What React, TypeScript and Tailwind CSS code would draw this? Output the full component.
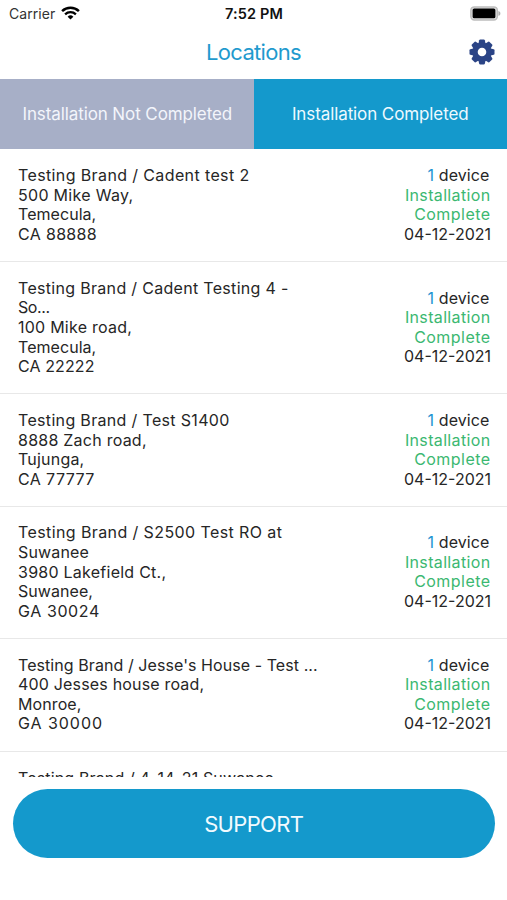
type Line = { text: string; tracking: string };

const locations: Line[][] = [
  [
    { text: "Testing Brand / Cadent test 2", tracking: "tracking-[0.38px]" },
    { text: "500 Mike Way,", tracking: "tracking-[0.3px]" },
    { text: "Temecula,", tracking: "tracking-[0.05px]" },
    { text: "CA 88888", tracking: "tracking-[0.33px]" },
  ],
  [
    { text: "Testing Brand / Cadent Testing 4 -", tracking: "tracking-[0.31px]" },
    { text: "So...", tracking: "tracking-[-0.4px]" },
    { text: "100 Mike road,", tracking: "tracking-[0.24px]" },
    { text: "Temecula,", tracking: "tracking-[0.05px]" },
    { text: "CA 22222", tracking: "tracking-[0.1px]" },
  ],
  [
    { text: "Testing Brand / Test S1400", tracking: "tracking-[0.33px]" },
    { text: "8888 Zach road,", tracking: "tracking-[0.24px]" },
    { text: "Tujunga,", tracking: "tracking-[0.2px]" },
    { text: "CA 77777", tracking: "tracking-[0.4px]" },
  ],
  [
    { text: "Testing Brand / S2500 Test RO at", tracking: "tracking-[0.4px]" },
    { text: "Suwanee", tracking: "tracking-[0.15px]" },
    { text: "3980 Lakefield Ct.,", tracking: "tracking-[0.25px]" },
    { text: "Suwanee,", tracking: "tracking-[0.05px]" },
    { text: "GA 30024", tracking: "tracking-[0.6px]" },
  ],
  [
    { text: "Testing Brand / Jesse's House - Test ...", tracking: "tracking-[0.07px]" },
    { text: "400 Jesses house road,", tracking: "tracking-[0.18px]" },
    { text: "Monroe,", tracking: "tracking-[0.1px]" },
    { text: "GA 30000", tracking: "tracking-[0.95px]" },
  ],
];

function WifiIcon() {
  return (
    <svg width="19" height="14" viewBox="0 0 19 14" fill="none" stroke="#000" className="mt-[-2px]">
      <path d="M1.1 5.1a12.1 12.1 0 0 1 16.8 0" strokeWidth="2.5" />
      <path d="M4.1 8.3a7.8 7.8 0 0 1 10.8 0" strokeWidth="2.3" />
      <path d="M9.5 13.6 6.6 10.7a4.2 4.2 0 0 1 5.8 0z" fill="#000" stroke="none" />
    </svg>
  );
}

function BatteryIcon() {
  return (
    <svg width="31" height="15" viewBox="0 0 31 15">
      <rect x="0.9" y="0.9" width="26.4" height="13" rx="3.4" fill="#e4e4e4" stroke="#bdbdbd" strokeWidth="1.5" />
      <rect x="2.6" y="2.5" width="22.8" height="9.8" rx="1.6" fill="#000" />
      <path d="M28.4 5c1.4.5 2 1.4 2 2.4s-.6 1.9-2 2.4z" fill="#b0b0b0" />
    </svg>
  );
}

const teeth = [0, 45, 90, 135, 180, 225, 270, 315];

function GearIcon() {
  return (
    <svg width="26" height="26" viewBox="-13 -13 26 26" fill="#2b4486" className="mb-[2px]">
      {teeth.map((angle) => (
        <path
          key={angle}
          d="M-3.7 -8 L-2.8 -11.7 Q-2.6 -12.5 -1.8 -12.5 H1.8 Q2.6 -12.5 2.8 -11.7 L3.7 -8z"
          transform={`rotate(${angle})`}
        />
      ))}
      <circle r="6.9" fill="none" stroke="#2b4486" strokeWidth="5.2" />
    </svg>
  );
}

function LocationRow({ lines }: { lines: Line[] }) {
  return (
    <li className="flex shrink-0 items-center justify-between border-b border-[#e8e8e8] py-[16.6px] pr-[16px] pl-[18px]">
      <div>
        {lines.map((line, i) => (
          <p key={i} className={line.tracking}>
            {line.text}
          </p>
        ))}
      </div>
      <div className="text-right">
        <p className="pr-[1.5px] tracking-[0.1px]">
          <span className="text-[#1d94d2]">1</span> device
        </p>
        <p className="pr-[0.5px] tracking-[0.35px] text-[#3bb871]">Installation</p>
        <p className="pr-[0.5px] tracking-[0.45px] text-[#3bb871]">Complete</p>
        <p>04-12-2021</p>
      </div>
    </li>
  );
}

export default function App() {
  return (
    <div className="flex h-[900px] w-[507px] flex-col overflow-hidden bg-white font-['Inter',sans-serif]">
      <div className="flex h-[27px] shrink-0 items-center pr-[6px] pl-[9px] text-[14px] text-[#111]">
        <div className="flex flex-1 items-center gap-[6px]">
          <span className="tracking-[0.05px] text-[#333]">Carrier</span>
          <WifiIcon />
        </div>
        <span className="mr-[2px] text-[14.5px] font-semibold tracking-[0.15px]">7:52 PM</span>
        <div className="flex flex-1 justify-end">
          <BatteryIcon />
        </div>
      </div>
      <header className="flex h-[52px] shrink-0 items-center pr-[12px] pl-[12px]">
        <div className="w-[26px]" />
        <h1 className="flex-1 pb-[2px] text-center text-[22px] tracking-[-0.7px] text-[#1f9ace]">Locations</h1>
        <GearIcon />
      </header>
      <nav className="grid h-[69.5px] shrink-0 grid-cols-2 text-[17px] tracking-[-0.1px] text-white">
        <button className="bg-[#a7afc7] pt-[2px] pl-[1px] text-[#f3f5fb]">Installation Not Completed</button>
        <button className="bg-[#1499cc] pt-[2px] text-[#eefaff]">Installation Completed</button>
      </nav>
      <ul className="flex h-[628.3px] shrink-0 flex-col overflow-hidden pt-[1.1px] text-[16px] leading-[19.6px] whitespace-nowrap text-[#262626]">
        {locations.map((lines, i) => (
          <LocationRow key={i} lines={lines} />
        ))}
        <li className="shrink-0 pt-[17.2px] pl-[18px] tracking-[0.15px]">Testing Brand / 4-14-21 Suwanee</li>
      </ul>
      <div className="shrink-0 pt-[12.7px] pr-[12.5px] pl-[13px]">
        <button className="h-[68.5px] w-full rounded-full bg-[#1499cc] pt-[2px] text-[22px] tracking-[-0.65px] text-[#f2fbff]">
          SUPPORT
        </button>
      </div>
    </div>
  );
}
